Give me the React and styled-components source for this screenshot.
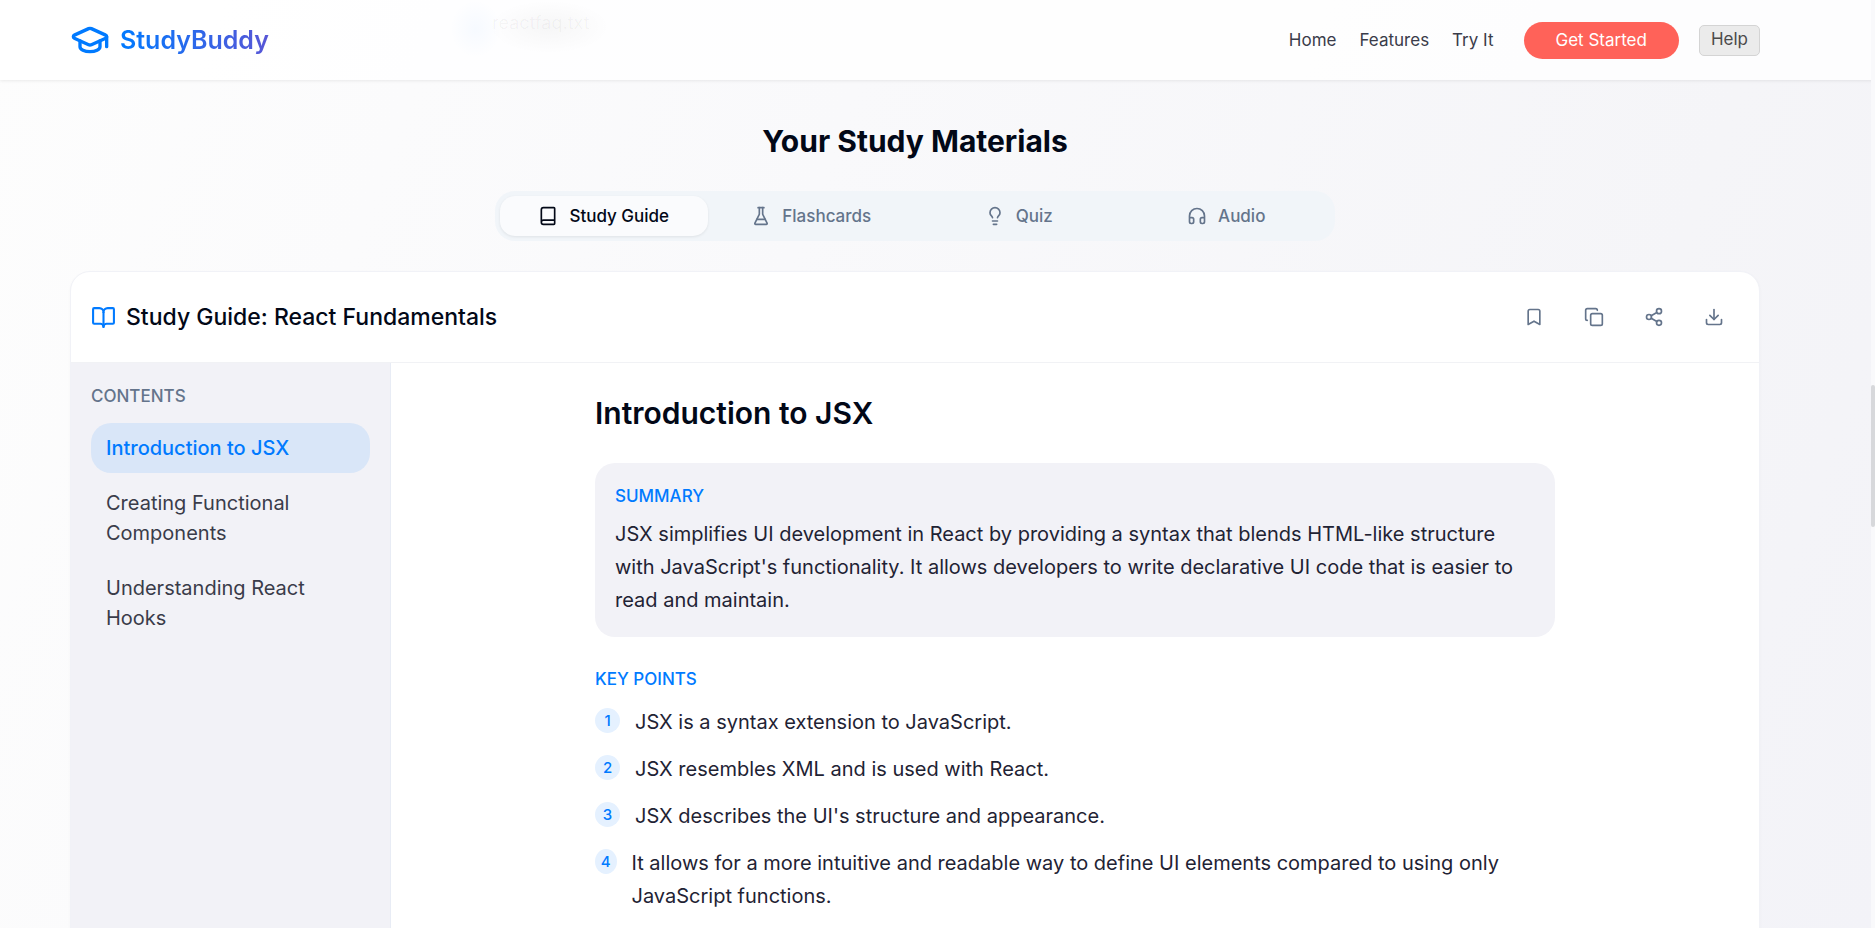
import React, { useState } from 'react';
import styled, { createGlobalStyle, css } from 'styled-components';
import { GraduationCap, Book, Lightbulb, Headphones, BookOpen, Bookmark, Copy, Share2, Download } from 'lucide-react';

const GlobalStyle = createGlobalStyle`
  *, *::before, *::after { box-sizing: border-box; }
  body {
    margin: 0;
    font-family: Inter, "Liberation Sans", sans-serif;
    font-size: 20px;
    line-height: 30px;
    color: #020817;
    -webkit-font-smoothing: antialiased;
  }
  h1, h2, h3, h4, p, ul, ol { margin: 0; padding: 0; }
  ul, ol { list-style: none; }
  button { font: inherit; border: 0; background: none; cursor: pointer; }
  a { color: inherit; text-decoration: none; }
`;

const Page = styled.div`
  height: 100vh;
  overflow: hidden;
  display: flex;
  flex-direction: column;
  background: linear-gradient(110deg, #fdfdfd 0%, #f9f9fb 40%, #f5f5f8 80%, #f3f3f8 100%);
`;

const gutters = css`
  padding-left: 70px;
  padding-right: 115px;
`;

const Header = styled.header`
  ${gutters}
  position: relative;
  flex: none;
  height: 80px;
  display: flex;
  align-items: center;
  justify-content: space-between;
  background: rgba(255, 255, 255, 0.8);
  box-shadow: 0 1px 3px rgba(0, 0, 0, 0.08);
`;

const FileGhost = styled.span`
  position: absolute;
  left: 24%;
  top: 0;
  padding: 8px 20px 26px 42px;
  font-size: 18px;
  line-height: 30px;
  color: rgba(0, 0, 0, 0.04);
  background:
    radial-gradient(closest-side at 62% 42%, rgba(0, 0, 0, 0.03), transparent),
    radial-gradient(closest-side at 16% 45%, rgba(0, 122, 255, 0.03), transparent);
`;

const Brand = styled.a`
  display: flex;
  align-items: center;
  gap: 10px;
  color: #007aff;
`;

const BrandName = styled.span`
  font-size: 25px;
  font-weight: 600;
  line-height: 35px;
  background: linear-gradient(90deg, #007aff, #5856d6);
  background-clip: text;
  color: transparent;
`;

const Nav = styled.nav`
  display: flex;
  align-items: center;
  gap: 20px;
`;

const NavLinks = styled.div`
  display: flex;
  gap: 23px;
  margin-right: 10px;
`;

const NavLink = styled.a`
  font-size: 17px;
  line-height: 25px;
  color: #3a3c4a;
`;

const StartButton = styled.button`
  padding: 6px 32px;
  border-radius: 20px;
  background: #ff6259;
  color: #ffffff;
  font-size: 17px;
  line-height: 25px;
`;

const HelpButton = styled.button`
  padding: 1px 11px 3px;
  border: 1px solid #d4d4d4;
  border-radius: 5px;
  background: #ebebeb;
  color: #4a4a4a;
  font-size: 17px;
  line-height: 25px;
`;

const Main = styled.main`
  ${gutters}
  flex: 1;
  min-height: 0;
  display: flex;
  flex-direction: column;
`;

const PageTitle = styled.h1`
  margin-top: 41px;
  text-align: center;
  font-size: 30px;
  font-weight: 700;
  line-height: 40px;
`;

const Tabs = styled.div`
  align-self: center;
  width: 100%;
  max-width: 840px;
  margin: 30px 0;
  padding: 5px;
  display: grid;
  grid-template-columns: repeat(4, 1fr);
  border-radius: 20px;
  background: #f1f5f9;
`;

const Tab = styled.button`
  display: flex;
  align-items: center;
  justify-content: center;
  gap: 11px;
  height: 40px;
  border-radius: 15px;
  font-size: 17px;
  font-weight: 500;
  line-height: 26px;
  color: ${(p) => (p.$active ? '#020817' : '#64748b')};
  ${(p) => p.$active && css`
    background: #fafbfd;
    box-shadow: 0 1px 3px rgba(0, 0, 0, 0.08);
  `}
`;

const Card = styled.section`
  flex: 1 0 auto;
  display: flex;
  flex-direction: column;
  border: 1px solid #f1f2f7;
  border-radius: 20px 20px 0 0;
  background: #ffffff;
  box-shadow: 0 1px 3px rgba(0, 0, 0, 0.03);
  overflow: hidden;
`;

const CardHeader = styled.div`
  display: flex;
  align-items: center;
  justify-content: space-between;
  padding: 20px;
  border-bottom: 1px solid #f1f2f5;
`;

const CardTitle = styled.h2`
  display: flex;
  align-items: center;
  gap: 10px;
  font-size: 23px;
  font-weight: 500;
  line-height: 36px;

  svg { color: #007aff; }
`;

const Actions = styled.div`
  display: flex;
  gap: 10px;
`;

const IconButton = styled.button`
  width: 50px;
  height: 50px;
  padding: 0;
  display: grid;
  place-items: center;
  color: #64748b;
`;

const CardBody = styled.div`
  flex: 1;
  display: flex;
`;

const Sidebar = styled.aside`
  flex: none;
  width: 320px;
  padding: 20px;
  border-right: 1px solid #e8ecf5;
  background: #f2f2f7;
`;

const SectionLabel = styled.h3`
  font-size: 17px;
  font-weight: 500;
  line-height: 27px;
  text-transform: uppercase;
  color: ${(p) => (p.$muted ? '#64748b' : '#007aff')};
`;

const ContentsList = styled.ul`
  margin-top: 13px;
  display: flex;
  flex-direction: column;
  gap: 5px;
`;

const ContentsItem = styled.button`
  width: 100%;
  padding: 10px 15px;
  border-radius: 20px;
  text-align: left;
  font-weight: ${(p) => (p.$active ? 500 : 400)};
  color: ${(p) => (p.$active ? '#007aff' : '#3a3c4a')};
  background: ${(p) => (p.$active ? '#d9e6f8' : 'transparent')};
`;

const Article = styled.article`
  flex: 1;
  padding: 30px;
`;

const ArticleInner = styled.div`
  max-width: 960px;
  margin: 0 auto;
`;

const ArticleTitle = styled.h2`
  font-size: 30px;
  font-weight: 600;
  line-height: 40px;
`;

const Summary = styled.section`
  margin: 30px 0 29px;
  padding: 20px;
  border-radius: 20px;
  background: #f2f2f7;
`;

const SummaryText = styled.p`
  margin-top: 8px;
  line-height: 33px;
  color: #1f2334;
`;

const Points = styled.ol`
  margin-top: 13px;
  display: flex;
  flex-direction: column;
  gap: 14px;
`;

const Point = styled.li`
  display: flex;
  align-items: flex-start;
  gap: 15px;
  line-height: 33px;
  color: #1f2334;
`;

const PointNumber = styled.span`
  width: 25px;
  height: 25px;
  margin-top: 2px;
  display: flex;
  align-items: center;
  justify-content: center;
  border-radius: 50%;
  background: #e5f1ff;
  color: #007aff;
  font-size: 15px;
  font-weight: 500;
`;

const ScrollTrack = styled.div`
  position: fixed;
  top: 0;
  right: 0;
  bottom: 0;
  width: 4px;
  background: #f9f9fb;
`;

const ScrollThumb = styled.div`
  height: 142px;
  margin-top: 385px;
  border-radius: 3px;
  background: #d7d8db;
`;

const Flask = ({ size }) => (
  <svg width={size} height={size} viewBox="0 0 24 24" fill="none" stroke="currentColor" strokeWidth="2" strokeLinecap="round" strokeLinejoin="round" aria-hidden="true">
    <path d="M10 2v7.527a2 2 0 0 1-.211.896L4.72 20.55a1 1 0 0 0 .9 1.45h12.76a1 1 0 0 0 .9-1.45l-5.069-10.127A2 2 0 0 1 14 9.527V2" />
    <path d="M8.5 2h7" />
    <path d="M7 16h10" />
  </svg>
);

const tabs = [
  { name: 'Study Guide', Icon: Book },
  { name: 'Flashcards', Icon: Flask },
  { name: 'Quiz', Icon: Lightbulb },
  { name: 'Audio', Icon: Headphones },
];

const actions = [
  { name: 'Bookmark', Icon: Bookmark },
  { name: 'Copy', Icon: Copy },
  { name: 'Share', Icon: Share2 },
  { name: 'Download', Icon: Download },
];

const chapters = ['Introduction to JSX', 'Creating Functional Components', 'Understanding React Hooks'];

const points = [
  'JSX is a syntax extension to JavaScript.',
  'JSX resembles XML and is used with React.',
  "JSX describes the UI's structure and appearance.",
  'It allows for a more intuitive and readable way to define UI elements compared to using only JavaScript functions.',
];

export default function App() {
  const [tab, setTab] = useState('Study Guide');
  const [chapter, setChapter] = useState(chapters[0]);

  return (
    <Page>
      <GlobalStyle />
      <Header>
        <FileGhost aria-hidden="true">reactfaq.txt</FileGhost>
        <Brand href="#home">
          <GraduationCap size={40} />
          <BrandName>StudyBuddy</BrandName>
        </Brand>
        <Nav>
          <NavLinks>
            <NavLink href="#home">Home</NavLink>
            <NavLink href="#features">Features</NavLink>
            <NavLink href="#try">Try It</NavLink>
          </NavLinks>
          <StartButton>Get Started</StartButton>
          <HelpButton>Help</HelpButton>
        </Nav>
      </Header>
      <Main>
        <PageTitle>Your Study Materials</PageTitle>
        <Tabs role="tablist">
          {tabs.map(({ name, Icon }) => (
            <Tab key={name} role="tab" aria-selected={tab === name} $active={tab === name} onClick={() => setTab(name)}>
              <Icon size={20} />
              {name}
            </Tab>
          ))}
        </Tabs>
        <Card>
          <CardHeader>
            <CardTitle>
              <BookOpen size={25} />
              Study Guide: React Fundamentals
            </CardTitle>
            <Actions>
              {actions.map(({ name, Icon }) => (
                <IconButton key={name} aria-label={name}>
                  <Icon size={20} />
                </IconButton>
              ))}
            </Actions>
          </CardHeader>
          <CardBody>
            <Sidebar>
              <SectionLabel $muted>Contents</SectionLabel>
              <ContentsList>
                {chapters.map((name) => (
                  <li key={name}>
                    <ContentsItem $active={chapter === name} onClick={() => setChapter(name)}>
                      {name}
                    </ContentsItem>
                  </li>
                ))}
              </ContentsList>
            </Sidebar>
            <Article>
              <ArticleInner>
                <ArticleTitle>Introduction to JSX</ArticleTitle>
                <Summary>
                  <SectionLabel>Summary</SectionLabel>
                  <SummaryText>
                    JSX simplifies UI development in React by providing a syntax that blends HTML-like structure with
                    JavaScript's functionality. It allows developers to write declarative UI code that is easier to
                    read and maintain.
                  </SummaryText>
                </Summary>
                <SectionLabel>Key Points</SectionLabel>
                <Points>
                  {points.map((text, i) => (
                    <Point key={text}>
                      <PointNumber>{i + 1}</PointNumber>
                      <span>{text}</span>
                    </Point>
                  ))}
                </Points>
              </ArticleInner>
            </Article>
          </CardBody>
        </Card>
      </Main>
      <ScrollTrack aria-hidden="true">
        <ScrollThumb />
      </ScrollTrack>
    </Page>
  );
}
